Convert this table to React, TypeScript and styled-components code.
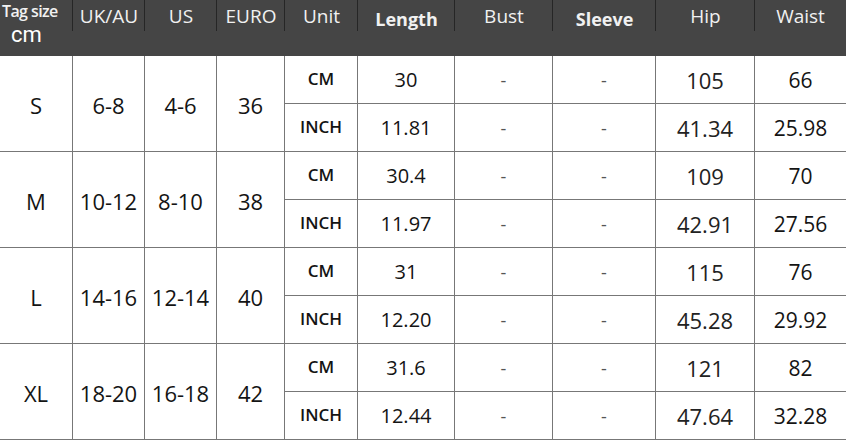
import styled, { createGlobalStyle } from 'styled-components';

const GlobalStyle = createGlobalStyle`
  html, body {
    margin: 0;
    padding: 0;
    background: #ffffff;
  }
  body {
    font-family: 'Open Sans', 'Noto Sans', sans-serif;
    width: 846px;
    height: 440px;
    overflow: hidden;
  }
`;

const COLUMNS = '73px 72px 72px 68px 73px 97px 98px 103px 99px 91px';

interface SizeRow {
  tag: string;
  uk: string;
  us: string;
  euro: string;
  cm: [string, string, string, string, string];
  inch: [string, string, string, string, string];
}

const rows: SizeRow[] = [
  { tag: 'S', uk: '6-8', us: '4-6', euro: '36', cm: ['30', '-', '-', '105', '66'], inch: ['11.81', '-', '-', '41.34', '25.98'] },
  { tag: 'M', uk: '10-12', us: '8-10', euro: '38', cm: ['30.4', '-', '-', '109', '70'], inch: ['11.97', '-', '-', '42.91', '27.56'] },
  { tag: 'L', uk: '14-16', us: '12-14', euro: '40', cm: ['31', '-', '-', '115', '76'], inch: ['12.20', '-', '-', '45.28', '29.92'] },
  { tag: 'XL', uk: '18-20', us: '16-18', euro: '42', cm: ['31.6', '-', '-', '121', '82'], inch: ['12.44', '-', '-', '47.64', '32.28'] },
];

const headers: { label: string; bold?: boolean }[] = [
  { label: 'UK/AU' },
  { label: 'US' },
  { label: 'EURO' },
  { label: 'Unit' },
  { label: 'Length', bold: true },
  { label: 'Bust' },
  { label: 'Sleeve', bold: true },
  { label: 'Hip' },
  { label: 'Waist' },
];

// kinds of value cells, each with its own type size in the picture
type Kind = 'length' | 'dash' | 'hip' | 'waist';
const kinds: Kind[] = ['length', 'dash', 'dash', 'hip', 'waist'];

export default function App() {
  return (
    <>
      <GlobalStyle />
      <Chart>
        <Header>
          <TagHead>
            <TagLabel>Tag size</TagLabel>
            <CmLabel>cm</CmLabel>
          </TagHead>
          {headers.map((h, i) => (
            <HeadCell key={h.label} $bold={h.bold} $last={i === headers.length - 1}>
              {h.label}
            </HeadCell>
          ))}
        </Header>
        <Body>
          {rows.map((r) => (
            <Group key={r.tag}>
              <SizeCell>{r.tag}</SizeCell>
              <SizeCell>{r.uk}</SizeCell>
              <SizeCell>{r.us}</SizeCell>
              <SizeCell>{r.euro}</SizeCell>
              <UnitCell>CM</UnitCell>
              {r.cm.map((v, i) => (
                <ValueCell key={`cm${i}`} $kind={kinds[i]} $last={i === 4}>
                  {v}
                </ValueCell>
              ))}
              <UnitCell>INCH</UnitCell>
              {r.inch.map((v, i) => (
                <ValueCell key={`in${i}`} $kind={kinds[i]} $last={i === 4}>
                  {v}
                </ValueCell>
              ))}
            </Group>
          ))}
        </Body>
      </Chart>
    </>
  );
}

const Chart = styled.div`
  width: 846px;
  height: 440px;
  display: flex;
  flex-direction: column;
`;

const Header = styled.div`
  display: grid;
  grid-template-columns: ${COLUMNS};
  height: 56px;
  background: #454545;
  color: #f1f1f1;
`;

const divider = `
  content: '';
  position: absolute;
  right: 0;
  top: 0;
  width: 1px;
  height: 31px;
  background: #262626;
`;

const HeadCell = styled.div<{ $bold?: boolean; $last?: boolean }>`
  position: relative;
  text-align: center;
  white-space: nowrap;
  font-size: ${(p) => (p.$bold ? 18 : 19)}px;
  font-weight: ${(p) => (p.$bold ? 700 : 500)};
  line-height: 24px;
  padding-top: ${(p) => (p.$bold ? 7 : 4)}px;

  &::after {
    ${divider}
    display: ${(p) => (p.$last ? 'none' : 'block')};
  }
`;

const TagHead = styled.div`
  position: relative;
  display: flex;
  flex-direction: column;
  padding-left: 2px;

  &::after {
    ${divider}
  }
`;

const TagLabel = styled.span`
  font-size: 16px;
  font-weight: 600;
  line-height: 22px;
  letter-spacing: -0.6px;
  white-space: nowrap;
`;

const CmLabel = styled.span`
  font-family: Roboto, 'Liberation Sans', sans-serif;
  font-size: 22px;
  line-height: 26px;
  color: #ffffff;
  padding-left: 9px;
`;

const Body = styled.div`
  display: flex;
  flex-direction: column;
`;

const Group = styled.div`
  display: grid;
  grid-template-columns: ${COLUMNS};
  grid-template-rows: 48px 48px;
`;

const Cell = styled.div`
  display: flex;
  align-items: center;
  justify-content: center;
  white-space: nowrap;
  border-right: 1px solid #777777;
  border-bottom: 1px solid #777777;
  color: #141414;
  box-sizing: border-box;
`;

const SizeCell = styled(Cell)`
  grid-row: span 2;
  font-size: 22px;
  font-weight: 500;
  padding-top: 2px;
`;

const UnitCell = styled(Cell)`
  font-size: 17px;
  font-weight: 600;
  padding-bottom: 2px;
`;

const valueSize: Record<Kind, number> = {
  length: 20,
  dash: 18,
  hip: 22,
  waist: 21,
};

const ValueCell = styled(Cell)<{ $kind: Kind; $last?: boolean }>`
  font-size: ${(p) => valueSize[p.$kind]}px;
  font-weight: ${(p) => (p.$kind === 'hip' ? 400 : 500)};
  color: ${(p) => (p.$kind === 'dash' ? '#555555' : p.$kind === 'hip' ? '#222222' : '#141414')};
  border-right: ${(p) => (p.$last ? 'none' : '1px solid #777777')};
`;
